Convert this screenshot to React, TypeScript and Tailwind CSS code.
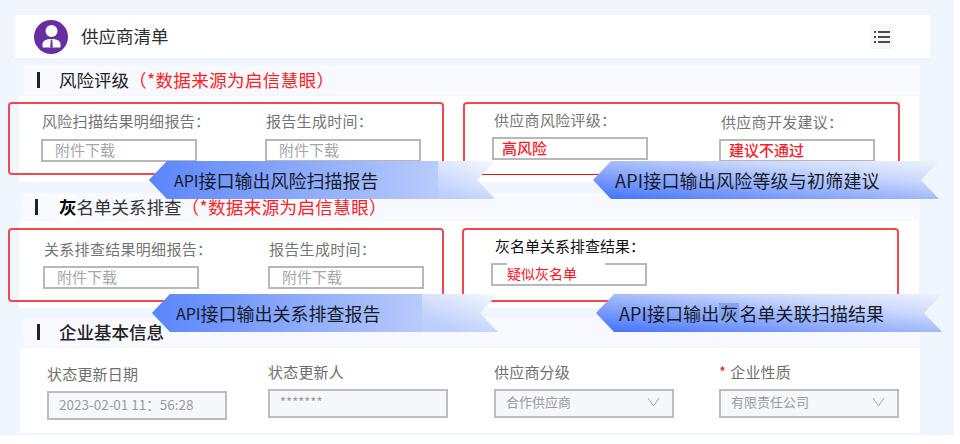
const font = { cjk: 'font-["Noto_Sans_CJK_SC","Noto_Sans",sans-serif]' };

function SectionTitle({ children, className }: { children: React.ReactNode; className: string }) {
  return (
    <div className={`flex items-center bg-[#f7f9fe] ${className}`}>
      <span className="ml-[14px] h-[16px] w-[3px] bg-[#222]" />
      {children}
    </div>
  );
}

function RedNote() {
  return <span className="whitespace-nowrap text-[17.5px] tracking-[0.4px] text-[#fb2020]">（*数据来源为启信慧眼）</span>;
}

function Field({ label, value, className = '', red = false, gap = 'mt-[6px]', labelClass = '' }: { label: string; value: string; className?: string; red?: boolean; gap?: string; labelClass?: string }) {
  return (
    <div className={`flex w-[156px] shrink-0 flex-col ${className}`}>
      <span className={`h-[25px] whitespace-nowrap text-[15px] leading-[25px] tracking-[0.3px] text-[#757575] ${labelClass}`}>{label}</span>
      <div className={`h-[23px] border-2 border-[#b8b8b8] bg-white text-[15px] leading-[17px] ${gap} ${red ? 'pl-[8px] font-medium text-[#fb1a2a]' : 'pl-[12px] text-[#a6a6a6]'}`}>
        {value}
      </div>
    </div>
  );
}

function InfoField({ label, value, select = false, className = '', star = false, valueClass = '' }: { label: string; value: string; select?: boolean; className?: string; star?: boolean; valueClass?: string }) {
  return (
    <div className={`flex w-[180px] shrink-0 flex-col ${className}`}>
      <span className="h-[24px] whitespace-nowrap text-[15px] leading-[24px] tracking-[0.2px] text-[#6f6f6f]">
        {star && <span className="mr-[4px] text-[#f02020]">*</span>}
        {label}
      </span>
      <div className="mt-[5px] flex h-[29px] items-center justify-between border-2 border-[#bdbdbd] bg-[#f6f7fb] pb-[3px] pl-[10px] pr-[12px] text-[13px] text-[#9b9b9b]">
        <span className={`whitespace-nowrap ${valueClass}`}>{value}</span>
        {select && (
          <svg width="13" height="10" viewBox="0 0 13 10" fill="none" stroke="#a5a5a5" strokeWidth="1">
            <path d="M1 1l5.5 8L12 1" />
          </svg>
        )}
      </div>
    </div>
  );
}

function Ribbon({ left, top, bg, pad, children }: { left: string; top: string; bg: string; pad: string; children: React.ReactNode }) {
  return (
    <div
      className={`absolute flex h-[38px] w-[346px] items-center whitespace-nowrap text-[18px] text-[#161b28] [clip-path:polygon(0_50%,18px_0,100%_0,calc(100%-18px)_50%,100%_100%,18px_100%)] ${left} ${top} ${bg} ${pad}`}
    >
      {children}
    </div>
  );
}

const wideBg = 'bg-[linear-gradient(to_top_right,#3f70fb_0%,#86a4fb_35%,#c9d7fc_70%,#eef2fe_100%)]';

export default function App() {
  return (
    <div className={`relative h-[444px] w-[960px] overflow-hidden bg-white ${font.cjk}`}>
      <div className="h-[435px] w-[954px] bg-[#f0f6fe] pt-[15px]">
        <div className="ml-[15px] flex h-[43px] w-[915px] items-center justify-between bg-white pl-[19px] pr-[37px]">
          <div className="flex items-center gap-[13px]">
            <svg width="34" height="34" viewBox="0 0 34 34">
              <circle cx="17" cy="17" r="17" fill="#682d9f" />
              <circle cx="17.500" cy="11" r="6" fill="#fff" />
              <path d="M8.500 27.500V24c0-3 3.500-4.800 7-5h4c3.500.2 7 2 7 5v3.500z" fill="#fff" />
              <path d="M16.800 19.500h1.400l.6 8h-2.600z" fill="#682d9f" />
            </svg>
            <span className="text-[17.500px] text-[#2e2e2e]">供应商清单</span>
          </div>
          <div className="flex h-[25px] w-[23px] items-center justify-center bg-[#f6f6f6]">
            <svg width="16" height="14" viewBox="0 0 16 14" fill="none" stroke="#4a4a4a" strokeWidth="1.800">
              <path d="M4 2h12M4 7h12M4 12h12M0 2h2M0 7h2M0 12h2" />
            </svg>
          </div>
        </div>

        <SectionTitle className="ml-[23px] mt-[7px] h-[30px] w-[897px]">
          <span className="ml-[19px] text-[17.500px] text-[#222]">风险评级</span>
          <RedNote />
        </SectionTitle>
        <div className="ml-[19px] mt-[1px] flex h-[86px] w-[900px] bg-white pt-[6px]">
          <div className="-ml-[11px] flex h-[73px] w-[436px] shrink-0 gap-[68px] rounded-[4px] border-2 border-[#f3474f] pl-[31px] pt-[4px]">
            <Field label="风险扫描结果明细报告：" value="附件下载" labelClass="ml-[1px]" />
            <Field label="报告生成时间：" value="附件下载" labelClass="ml-[1px]" />
          </div>
          <div className="ml-[19px] flex h-[73px] w-[437px] shrink-0 gap-[71px] rounded-[4px] border-2 border-b border-[#f3474f] border-b-[#e5101a] pl-[27px] pt-[3px]">
            <Field label="供应商风险评级：" value="高风险" red gap="mt-[5px]" labelClass="ml-[2px]" />
            <Field label="供应商开发建议：" value="建议不通过" red gap="mt-[5px]" className="pt-[2px]" labelClass="ml-[2px]" />
          </div>
        </div>

        <div className="ml-[21px] mt-[11px] flex h-[28px] w-[899px] items-center bg-[#f7f9fe]">
          <span className="ml-[14px] h-[16px] w-[3px] bg-[#222]" />
          <span className="ml-[21px] flex h-[28px] items-center whitespace-nowrap text-[17.500px] text-[#333]">
            <span className="bg-white font-bold text-black">灰</span>名单关系排查
          </span>
          <RedNote />
        </div>
        <div className="ml-[19px] flex h-[87px] w-[900px] bg-white pt-[7px]">
          <div className="-ml-[11px] flex h-[74px] w-[436px] shrink-0 gap-[69px] rounded-[4px] border-2 border-[#f3474f] pl-[33px] pt-[6px]">
            <Field label="关系排查结果明细报告：" value="附件下载" gap="mt-[5px]" labelClass="ml-[1px]" />
            <Field label="报告生成时间：" value="附件下载" gap="mt-[5px]" labelClass="ml-[1px]" />
          </div>
          <div className="ml-[18px] h-[74px] w-[437px] shrink-0 rounded-[4px] border-2 border-[#f3474f] pl-[27px] pt-[3px]">
            <div className="flex w-[156px] flex-col">
              <span className="ml-[4px] h-[25px] whitespace-nowrap text-[15px] leading-[25px] text-[#111]">灰名单关系排查结果：</span>
              <div className="mt-[5px] h-[23px] border-2 border-[#b8b8b8] bg-white pl-[14px]">
                <span className="-mt-[2px] block w-[98px] bg-white text-[14px] leading-[20px] text-[#fb0f1e]">疑似灰名单</span>
              </div>
            </div>
          </div>
        </div>

        <SectionTitle className="ml-[23px] mt-[9px] h-[30px] w-[897px]">
          <span className="ml-[19px] text-[17.500px] font-medium text-[#222]">企业基本信息</span>
        </SectionTitle>
        <div className="ml-[20px] mt-[1px] flex h-[85px] w-[900px] bg-white pl-[27px] pt-[13px]">
          <InfoField label="状态更新日期" value="2023-02-01 11：56:28" valueClass="text-[13.500px]" className="mt-[1px]" />
          <InfoField label="状态更新人" value="*******" className="ml-[41px] -mt-[1px]" />
          <InfoField label="供应商分级" value="合作供应商" select className="ml-[46px] -mt-[1px]" />
          <InfoField label="企业性质" value="有限责任公司" select star className="ml-[45px] -mt-[1px]" />
        </div>
      </div>

      <Ribbon left="left-[149px]" top="top-[161px]" pad="pl-[25px]" bg="bg-[linear-gradient(to_right,#5a85fb,#b9cbfb_83.5%,transparent_83.5%),linear-gradient(20deg,#bccefb_68%,#f6f8fe_100%)]">
        <span className="text-[16px]">API</span>接口输出风险扫描报告
      </Ribbon>
      <Ribbon left="left-[593px]" top="top-[161px]" pad="pl-[22px] tracking-[0.2px]" bg={wideBg}>
        API接口输出风险等级与初筛建议
      </Ribbon>
      <Ribbon left="left-[152px]" top="top-[294px]" pad="pl-[24px]" bg="bg-[linear-gradient(to_right,#5a85fb,#b9cbfb_78%,transparent_78%),linear-gradient(20deg,#bccefb_68%,#f6f8fe_100%)]">
        <span className="text-[16px]">API</span>接口输出关系排查报告
      </Ribbon>
      <Ribbon left="left-[596px]" top="top-[294px]" pad="pl-[23px] tracking-[0.1px]" bg={wideBg}>
        API接口输出<span className="inline-block h-[20px] bg-[#86a4ee] px-[1px] leading-[20px]">灰</span>名单关联扫描结果
      </Ribbon>
    </div>
  );
}
